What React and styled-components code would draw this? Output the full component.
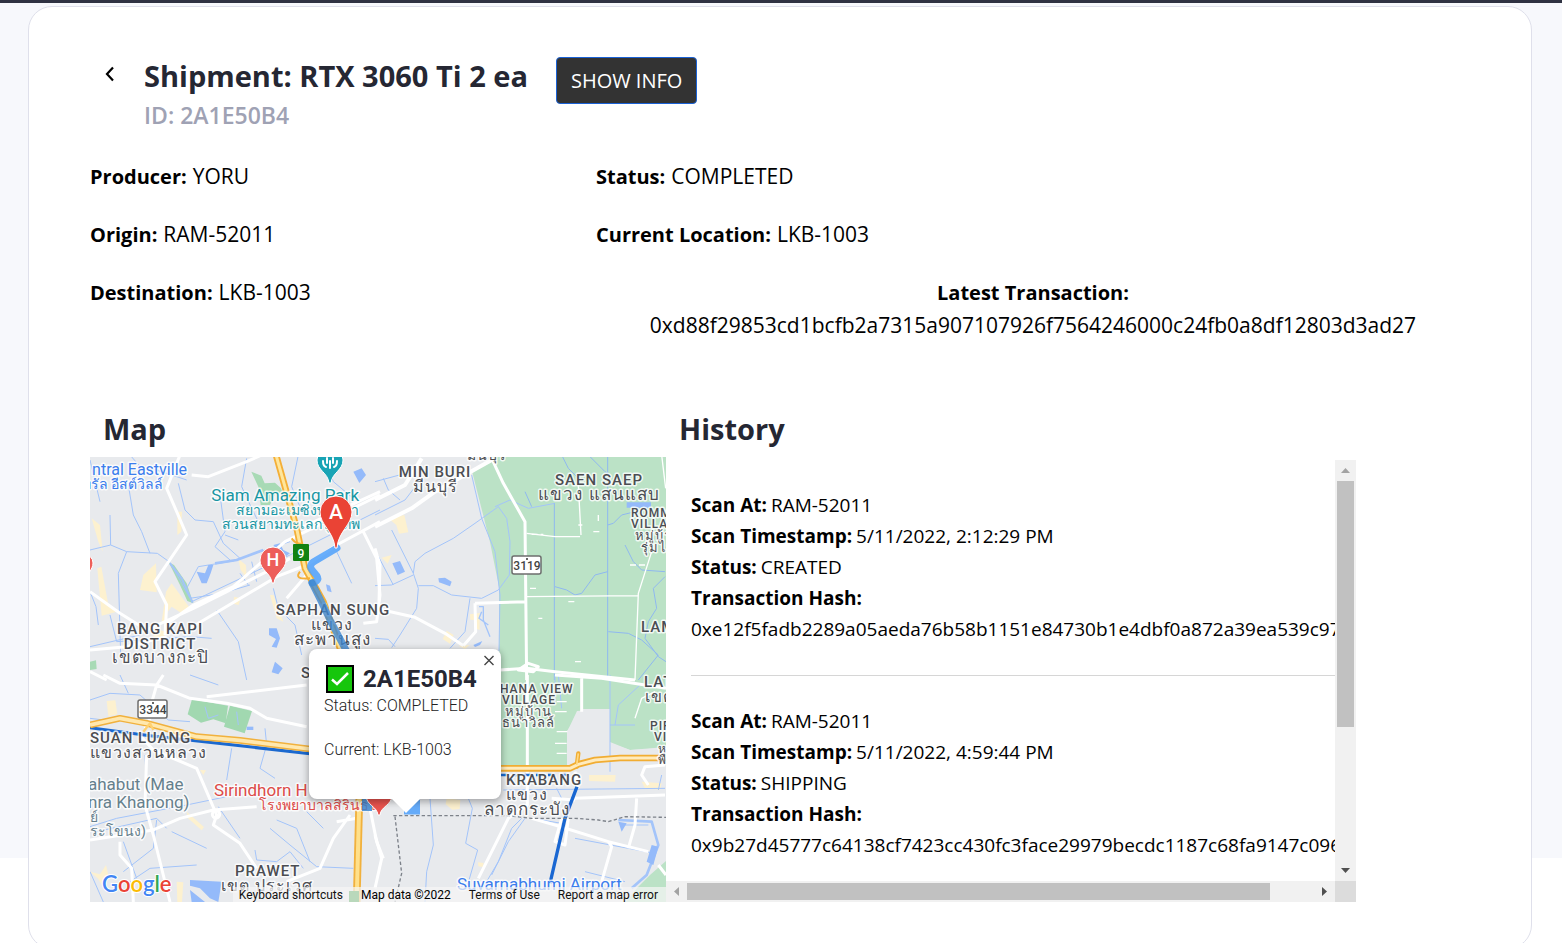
import React, { useState } from "react";
import styled, { createGlobalStyle } from "styled-components";

const GlobalStyle = createGlobalStyle`
  *, *::before, *::after { box-sizing: border-box; }
  body {
    margin: 0;
    color: #000;
    background: #fff;
    font-family: "Open Sans", "Noto Sans", sans-serif;
  }
  h1, h2, h3, p, dl, dd, ul { margin: 0; padding: 0; }
  button { font-family: inherit; cursor: pointer; }
`;

const Page = styled.div`
  min-height: 100vh;
  border-top: 3px solid #2f3242;
  background: linear-gradient(#f7f8fc 0 855px, #fff 855px);
`;

const Card = styled.main`
  margin: 3px 30px 0 28px;
  padding: 50px 61px 46px;
  border: 1px solid #dfe0eb;
  border-radius: 24px;
  background: #fff;
`;

const Header = styled.header`
  display: flex;
  align-items: flex-start;
  padding-left: 8px;
`;

const BackButton = styled.button`
  display: flex;
  align-items: center;
  justify-content: center;
  width: 24px;
  height: 34px;
  margin-right: 22px;
  padding: 0;
  border: 0;
  background: none;
`;

const Title = styled.h1`
  font-size: 29px;
  line-height: 38px;
  font-weight: 700;
  color: #252733;
`;

const ShipmentId = styled.p`
  font-size: 23px;
  line-height: 40px;
  font-weight: 600;
  color: #9fa2b4;
`;

const InfoButton = styled.button`
  height: 47px;
  margin-left: 28px;
  padding: 0 14px;
  border: 1px solid #1a62d6;
  border-radius: 4px;
  background: #333;
  color: #fff;
  font-size: 20px;
`;

const Details = styled.dl`
  display: grid;
  grid-template-columns: 11fr 19fr;
  row-gap: 25px;
  margin-top: 25px;
  font-size: 21px;
  line-height: 33px;
`;

const Detail = styled.div`
  display: flex;
  flex-direction: ${(p) => (p.$stacked ? "column" : "row")};
  align-items: ${(p) => (p.$stacked ? "center" : "baseline")};
  column-gap: 6px;
`;

const DetailTerm = styled.dt`
  font-size: 20px;
  font-weight: 700;
`;

const Term = styled.dt`
  font-weight: 700;
`;

const Value = styled.dd`
  font-weight: 400;
`;

const Panels = styled.div`
  display: grid;
  grid-template-columns: 96fr 115fr 19fr;
  margin-top: 70px;
`;

const Panel = styled.section`
  display: flex;
  flex-direction: column;
  min-width: 0;
`;

const PanelTitle = styled.h2`
  padding-left: 13px;
  padding-bottom: ${(p) => p.$space};
  font-size: 29px;
  line-height: 34px;
  font-weight: 700;
  color: #252733;
`;

const MapFrame = styled.div`
  position: relative;
  height: 445px;
  overflow: hidden;
  background: #e8eaed;
  font-family: Roboto, "Noto Sans", sans-serif;
`;

const MapSvg = styled.svg`
  display: block;
  width: 100%;
  height: 100%;
`;

const InfoWindow = styled.div`
  position: absolute;
  left: 219px;
  top: 192px;
  width: 192px;
  height: 150px;
  padding: 14px 14px 0 15px;
  border-radius: 8px;
  background: #fff;
  box-shadow: 0 2px 7px 1px rgba(0, 0, 0, 0.3);
  color: #222;
  font-size: 16px;
  font-weight: 300;
  line-height: 22px;

  &::after {
    content: "";
    position: absolute;
    top: 149px;
    left: 82px;
    border: 15px solid transparent;
    border-top-color: #fff;
    border-bottom-width: 0;
  }
`;

const MarkerTitle = styled.h3`
  display: flex;
  align-items: center;
  gap: 8px;
  height: 32px;
  padding-left: 2px;
  font-size: 24px;
  font-weight: 700;
  color: #252733;
`;

const MarkerLine = styled.p`
  height: 44px;
`;

const CloseButton = styled.button`
  position: absolute;
  top: 4px;
  right: 4px;
  width: 16px;
  height: 16px;
  padding: 0;
  border: 0;
  background: none;
  line-height: 0;
`;

const Attribution = styled.div`
  position: absolute;
  right: 0;
  bottom: 0;
  display: flex;
  gap: 18px;
  height: 15px;
  padding: 1px 8px 0 6px;
  background: rgba(245, 245, 245, 0.72);
  font-size: 12px;
  line-height: 15px;
  white-space: nowrap;
`;

const MapLink = styled.a`
  color: #111;
  text-decoration: none;
`;

const MapAction = styled.button`
  padding: 0;
  border: 0;
  background: none;
  color: #111;
  font-size: 12px;
  line-height: 15px;
`;

const ScrollBox = styled.div`
  display: grid;
  grid-template-columns: minmax(0, 1fr) 21px;
  grid-template-rows: minmax(0, 1fr) 21px;
  height: 442px;
`;

const Viewport = styled.div`
  overflow: auto;
  padding: 30px 0 0 25px;
  scrollbar-width: none;
`;

const Track = styled.div`
  display: flex;
  flex-direction: ${(p) => (p.$vertical ? "column" : "row")};
  background: #f1f1f1;
`;

const ArrowButton = styled.button`
  flex: none;
  display: flex;
  align-items: center;
  justify-content: center;
  width: 21px;
  height: 21px;
  padding: 0;
  border: 0;
  background: none;
  color: ${(p) => (p.$dim ? "#a3a3a3" : "#505050")};
`;

const Groove = styled.div`
  flex: 1;
  padding: ${(p) => (p.$vertical ? "0 2px" : "2px 0")};
`;

const Thumb = styled.div`
  width: ${(p) => (p.$vertical ? "100%" : "93%")};
  height: ${(p) => (p.$vertical ? "65%" : "100%")};
  background: #c1c1c1;
`;

const Corner = styled.div`
  background: #dcdcdc;
`;

const Scan = styled.dl`
  padding-bottom: 30px;
  font-size: 19px;
  line-height: 31px;
  white-space: nowrap;

  & + & {
    padding-top: 30px;
    border-top: 1px solid #d6d6d6;
  }
`;

const Pair = styled.div`
  display: flex;
  flex-direction: ${(p) => (p.$stacked ? "column" : "row")};
  column-gap: 4px;
`;

const Label = styled.text`
  font-family: Roboto, "Noto Sans", sans-serif;
  font-size: ${(p) => p.$size}px;
  font-weight: ${(p) => p.$weight || 500};
  letter-spacing: ${(p) => (p.$tracked ? "1px" : "normal")};
  fill: ${(p) => p.$color || "#4b4d52"};
  stroke: #fff;
  stroke-width: 3px;
  stroke-opacity: 0.8;
  stroke-linejoin: round;
  paint-order: stroke;
`;

const PlainLabel = styled.text`
  font-family: Roboto, sans-serif;
  font-size: ${(p) => p.$size}px;
  font-weight: 500;
  fill: ${(p) => p.$color};
  text-anchor: middle;
`;

const Logo = styled.text`
  font-family: Lato, Roboto, sans-serif;
  font-size: 22px;
  font-weight: 600;
  stroke: #fff;
  stroke-width: 2px;
  paint-order: stroke;
`;

const BLUE = "#3b7ded";
const TEAL = "#1796a3";
const RED = "#dd4b48";
const SLATE = "#66808c";

const labels = [
  [97, 18, 16, "ntral Eastville", BLUE, "end"],
  [73, 32, 14, "ทรัล อีสต์วิลล์", BLUE, "end"],
  [269, 44, 17, "Siam Amazing Park", TEAL, "end"],
  [269, 58, 14, "สยามอะเมซิ่งพาร์คา", TEAL, "end"],
  [270, 72, 14, "สวนสยามทะเลกรุงเทพ", TEAL, "end"],
  [124, 339, 17, "Sirindhorn H", RED, "start"],
  [169, 353, 14, "โรงพยาบาลสิรินธร", RED, "start"],
  [-2, 333, 17, "ahabut (Mae", SLATE, "start"],
  [-2, 351, 17, "nra Khanong)", SLATE, "start"],
  [0, 365, 14, "ย์", SLATE, "start"],
  [0, 379, 14, "ระโขนง)", SLATE, "start"],
  [367, 433, 17, "Suvarnabhumi Airport", BLUE, "start"],
];

const places = [
  [397, 3, 14, "มีนบุรี", "middle"],
  [345, 20, 15, "MIN BURI", "middle"],
  [345, 35, 16, "มีนบุรี", "middle"],
  [509, 28, 15, "SAEN SAEP", "middle"],
  [509, 43, 17, "แขวง แสนแสบ", "middle"],
  [541, 60, 12, "ROMM", "start"],
  [541, 71, 12, "VILLA", "start"],
  [545, 83, 13, "หมู่บ้าน", "start"],
  [551, 95, 13, "รุ่มไทร", "start"],
  [551, 175, 15, "LAM", "start"],
  [243, 158, 15, "SAPHAN SUNG", "middle"],
  [242, 173, 16, "แขวง", "middle"],
  [242, 188, 17, "สะพานสูง", "middle"],
  [70, 177, 15, "BANG KAPI", "middle"],
  [70, 192, 15, "DISTRICT", "middle"],
  [70, 206, 17, "เขตบางกะปิ", "middle"],
  [211, 221, 15, "S", "start"],
  [410, 236, 12, "HANA VIEW", "start"],
  [439, 247, 12, "VILLAGE", "middle"],
  [438, 259, 13, "หมู่บ้าน", "middle"],
  [438, 270, 13, "ธนาวิลล์", "middle"],
  [554, 230, 15, "LAT", "start"],
  [555, 245, 16, "เขต", "start"],
  [560, 273, 12, "PIR", "start"],
  [564, 284, 12, "VI", "start"],
  [568, 296, 12, "ห", "start"],
  [568, 307, 12, "พื", "start"],
  [0, 286, 15, "SUAN LUANG", "start"],
  [0, 301, 16, "แขวงสวนหลวง", "start"],
  [145, 419, 15, "PRAWET", "start"],
  [131, 434, 16, "เขต ประเวศ", "start"],
  [416, 328, 15, "KRABANG", "start"],
  [437, 343, 16, "แขวง", "middle"],
  [437, 358, 17, "ลาดกระบัง", "middle"],
];

/* Map tiles: each group is drawn at three units to the pixel. */
const Q1 = "translate(0 -2) scale(.33333)";
const Q2 = "translate(285 -2) scale(.33333)";
const Q3 = "translate(0 218) scale(.33333)";
const Q4 = "translate(285 218) scale(.33333)";

function Pin({ x, y, fill, stroke, r, h, children, size }) {
  const cy = y - h;
  return (
    <g>
      <path
        d={`M${x - 1} ${y} C${x - 2} ${y - h * 0.45} ${x - r} ${cy + r * 0.8} ${x - r} ${cy} A${r} ${r} 0 0 1 ${x + r} ${cy} C${x + r} ${cy + r * 0.8} ${x + 2} ${y - h * 0.45} ${x + 1} ${y}Z`}
        fill={fill}
        stroke={stroke}
      />
      <PlainLabel x={x} y={cy + size / 3} $size={size} $color="#fff">
        {children}
      </PlainLabel>
    </g>
  );
}

function Shield({ x, y, children }) {
  return (
    <g>
      <rect x={x} y={y} width="29" height="18" rx="2" fill="#fff" stroke="#6d6d6d" strokeWidth="1.5" />
      <PlainLabel x={x + 15} y={y + 14} $size={12} $color="#444">{children}</PlainLabel>
      <circle cx={x + 15} cy={y + 3} r="1" fill="#333" />
    </g>
  );
}

function MapDrawing() {
  return (
    <MapSvg viewBox="0 0 576 445" preserveAspectRatio="xMinYMin slice" role="img" aria-label="Shipment route map">
      <rect width="576" height="445" fill="#e8eaed" />
      <g fill="#bbe2c6">
        <path d="M382 14 L402 0 H576 V291 L540 293 L520 285 V252 H492 L477 274 V311 L409 313 V180 L409 130 L400 85Z" />
        <path d="M576 404 L560 418 L548 430 L536 445 H576Z" />
      </g>
      <path d="M477 275 L487 254 L518 252 L520 286 L540 293 L576 290 V312 H477Z" fill="#e8eaed" />
      <g transform={Q1} fill="#a8dab5">
        <path d="M484 50 L514 62 524 85 555 83 573 100 577 112 555 118 540 150 512 150 505 95Z" />
        <path d="M236 322 L252 330 290 385 310 445 292 438 270 390Z" />
        <path d="M0 620 L18 616 20 642 0 645Z" />
      </g>
      <g transform={Q3} fill="#a1d8b0">
        <path d="M306 73 L414 92 407 145 370 133 333 143 293 118Z" />
        <path d="M420 92 L486 108 464 175 402 155Z" />
      </g>
      <g transform={Q1} fill="#fdf1cf">
        <path d="M5 190 L30 210 38 290 25 260Z M22 340 34 335 55 450 80 470 35 482Z M160 360 198 325 200 412 150 405Z M262 170 276 170 274 230 262 240Z M445 312 468 330 470 370 452 345Z M228 410 245 385 300 460 275 475 245 455 225 480 238 505 215 500Z M540 420 550 420 580 500 560 490Z M432 425 452 430 446 450 430 446Z M190 520 228 530 215 560 190 545Z" />
      </g>
      <g transform={Q2} fill="#fdf1cf">
        <path d="M40 190 L88 180 100 232 72 236 64 210Z M20 308 50 300 38 326Z M285 478 314 474 314 525 300 520 300 495 286 494Z M215 527 236 540 225 566 203 552Z M250 572 284 570 270 582Z" />
      </g>
      <g transform={Q3} fill="#fdf1cf">
        <path d="M50 78 L76 76 82 118 55 124Z M0 590 30 598 48 570 55 600 40 640 25 612Z M260 620 280 622 276 681 262 681Z M290 410 342 456 335 466 294 430Z M330 285 348 286 340 300Z" />
      </g>
      <g transform={Q4} fill="#fdf1cf">
        <path d="M215 370 L256 375 254 402 232 404 212 388Z M642 300 722 300 720 320 642 318Z M800 320 860 325 855 344 810 340Z M309 562 326 564 324 576 310 574Z" />
      </g>

      <g fill="none" stroke="#a3c4fa" strokeWidth="3" strokeLinejoin="round">
        <g transform={Q1}>
          <path d="M60 180 L62 270 110 290 202 295 240 322 275 385 300 430 395 415 480 390 M110 290 L85 355 92 600 M0 285 L62 270 M120 0 L155 40 200 45 290 75 M0 410 18 455 25 510 M115 90 130 180 155 230 180 295 M290 400 325 335 430 318 480 300 600 260 M0 15 30 140" />
          <path d="M265 85 L285 165 315 195 370 200 400 265 450 310 M390 120 405 230 375 275 420 315 M405 240 445 255 M470 10 455 95 485 160 505 200 550 210 M305 440 600 300 870 165 M450 355 475 390 M485 320 500 380 M550 400 565 460 615 510 635 600 M740 290 785 385 M625 0 605 95 640 180 M700 0 730 80 790 130 M380 465 445 560 470 675 M60 480 80 560 300 545 365 550 M0 575 150 540" />
          <path d="M320 350 345 355 355 330 370 330 362 355 350 385 335 385Z" fill="#94bafa" stroke="none" />
          <path d="M375 325 L440 315 480 300 520 285" strokeWidth="8" />
          <path d="M240 325 L275 370 308 443" strokeWidth="6" />
          <path d="M537 520 L560 520 570 550 560 578 545 575 558 552 537 540Z M555 620 578 640 565 658 545 652Z M790 50 815 40 828 60 808 84Z M708 388 720 392 725 412 712 408Z M550 270 570 265 580 285 600 295 580 310Z" fill="#94bafa" stroke="none" />
        </g>
        <g transform={Q2}>
          <path d="M0 80 L110 50 130 20 M0 180 90 135 140 70 M25 70 40 105 75 135 M290 60 320 190 360 290 375 420 372 590 M360 155 405 135 460 160 540 145 M115 355 120 320 150 295 235 250 300 205 370 155 395 190 405 260 403 360 370 405 320 430 230 420 175 392 130 392 M0 285 55 390 M50 225 115 355 130 400 125 460 75 540 50 578 M0 392 50 390 115 360 M0 550 40 553 60 575 M285 430 270 530 225 580" />
          <path d="M538 145 V675 M698 0 V675 M450 110 470 155 M560 0 580 40 615 75 M640 0 690 50 698 55 M698 210 715 205 740 180 780 170 M750 270 775 320 800 345 870 350 M540 395 575 405 600 420 620 415 660 360 698 350 M700 530 760 535 800 555 850 600 790 675 M870 365 835 400 845 460 820 500 810 550 850 605 873 620" stroke="#8fb8f0" />
          <path d="M312 455 L325 455 325 495 345 545 M320 470 312 490 340 510" strokeWidth="4" />
          <path d="M52 325 L75 318 90 350 68 360Z M190 370 210 368 230 380 225 394 192 382Z M755 142 828 142 828 158 755 158Z M295 570 322 558 315 570 300 576Z" fill="#94bafa" stroke="none" />
        </g>
        <g transform={Q3}>
          <path d="M0 75 L60 55 150 60 235 135 300 140 M90 0 115 55 M0 130 40 135 M425 220 410 315 M525 160 530 210 510 280 555 310 M0 455 80 430 290 390 410 365 M20 470 200 430 230 460 M245 470 350 520 M385 395 450 490 M200 435 190 520 100 590 M320 570 180 580 120 620 M495 525 500 555 560 560 600 530 640 580 M540 460 600 510 680 575 790 580 M560 435 620 460 660 560 M650 410 700 460 M100 500 140 610 M0 590 40 681 M165 240 170 340" />
          <path d="M300 0 L385 30 M345 95 355 130 385 120 M440 110 445 150" />
          <path d="M300 615 L395 620 385 681 360 670 330 640 300 632Z M300 645 L345 681 305 681Z" fill="#94bafa" stroke="none" />
          <path d="M470 155 L490 155 490 165 470 165Z" fill="#94bafa" stroke="none" />
        </g>
        <g transform={Q4}>
          <path d="M165 370 L175 510 155 590 150 681 M280 370 292 400 272 505 308 525 275 640 M540 0 V80 M705 0 V290 M705 150 780 150 M720 150 730 90 795 30 M550 0 560 100 M385 345 870 340 M440 430 410 460 370 560 320 645 M450 430 400 500 350 600 M470 430 560 445 M600 490 840 535 M630 590 750 620 M740 450 820 450 M545 340 560 370 M860 300 850 345" />
          <path d="M730 435 L830 440 850 510 815 600 770 640" strokeWidth="8" />
          <path d="M730 440 L755 445 740 470Z M830 510 850 515 835 570 815 560Z" fill="#94bafa" stroke="none" />
        </g>
      </g>

      <g fill="none" stroke="#fff" strokeWidth="9" strokeLinejoin="round">
        <g transform={Q1}>
          <path d="M270 0 L230 100 290 240 195 380 230 450 225 540 M305 60 355 65 470 20 515 0 M0 410 90 475 170 525 310 460 540 345 600 310 M225 510 310 450 430 395 585 260 870 120 M300 520 560 365 650 330 740 270 870 200 M640 215 870 110 M0 585 110 575 230 545 M820 230 860 310 870 420 860 500 820 505 M650 360 590 430 M0 650 50 675" />
        </g>
        <g transform={Q2}>
          <path d="M0 135 L90 90 140 10 M0 215 110 160 180 110 350 15" strokeWidth="12" />
          <path d="M350 10 L385 85 450 200 455 675 M300 445 455 440 M300 445 302 530 265 572 M0 460 120 487 210 535 265 572 M0 280 15 330 12 440 M375 645 455 640 540 650 780 675" />
          <path d="M860 0 L872 100 M830 290 790 415 780 675 M455 425 790 422 M455 235 540 245 615 245 M610 90 618 240" strokeWidth="4" />
          <path d="M430 645 L460 625 490 635 475 650Z" />
          <path d="M470 238 H505 M465 400 h20 M655 230 h24 M765 330 h45 M580 440 h20 M490 490 h12 M610 210 h12 M670 180 v20 M600 620 h18" strokeWidth="4" strokeDasharray="18 9" />
        </g>
        <g transform={Q3}>
          <path d="M40 0 L90 25 200 30 300 70 410 85 480 100 530 130 650 155 M220 0 200 30 180 100 M350 65 650 30 M140 170 190 225 320 280 350 350 380 420 370 450 450 505 500 580 M170 240 165 390 190 480 240 681 M0 495 190 465 270 430 370 405 500 395 M90 500 90 540 125 580 130 681 M780 420 730 490 690 580 590 620 M840 400 860 500 880 550 M740 440 800 430 M190 110 165 160" />
          <circle cx="378" cy="418" r="11" />
        </g>
        <g transform={Q4}>
          <path d="M457 0 V390 L400 430 310 610 M540 0 680 10 873 40 M620 0 V110 M600 290 610 340 M470 430 540 450 700 500 710 515 680 620 M700 500 820 530 M785 370 780 450 760 520 M600 370 870 360 M820 330 800 300 810 275 870 270 M530 370 600 375 M0 480 20 550 0 640 M560 430 540 500 570 510 580 430 M850 570 873 600" />
          <path d="M540 110 H575 M545 170 h32 M540 205 h35 M545 235 h30 M780 130 l20 -60 40 -20 M545 80 h30" strokeWidth="4" />
        </g>
      </g>

      <g fill="none" strokeLinejoin="round">
        <g transform={Q1}>
          <path d="M558 0 L620 220 645 340 700 440 750 580" stroke="#f4af37" strokeWidth="20" />
          <path d="M558 0 L620 220 645 340 700 440 750 580" stroke="#ffe69b" strokeWidth="9" />
          <path d="M605 250 Q620 270 635 265 M630 350 Q610 375 660 370" stroke="#f4af37" strokeWidth="6" />
        </g>
        <g transform={Q3}>
          <path d="M0 158 L180 182 660 236" stroke="#1b69cf" strokeWidth="9" />
          <path d="M0 150 L90 130 170 145 320 185 450 196 660 222" stroke="#f1b13d" strokeWidth="20" />
          <path d="M0 150 L90 130 170 145 320 185 450 196 660 222" stroke="#ffe8ae" strokeWidth="11" />
          <path d="M160 170 L180 145 190 165" stroke="#ffd170" strokeWidth="7" />
          <path d="M808 370 L800 681" stroke="#f1b13d" strokeWidth="23" />
          <path d="M808 370 L800 681" stroke="#ffe08a" strokeWidth="12" />
        </g>
        <g transform={Q4}>
          <path d="M375 300 H590" stroke="#1b69cf" strokeWidth="8" strokeDasharray="22 14" />
          <path d="M606 335 L570 430 525 625" stroke="#1967d2" strokeWidth="10" />
          <path d="M375 280 H585 L610 268 660 255 735 249 H873" stroke="#f1ad32" strokeWidth="20" />
          <path d="M605 275 L610 235" stroke="#f1ad32" strokeWidth="13" strokeLinecap="round" />
          <path d="M375 280 H585 L610 268 660 255 735 249 H873" stroke="#ffebbd" strokeWidth="9" />
          <path d="M605 270 L610 235" stroke="#ffd982" strokeWidth="5" />
          <path d="M55 422 H400 L470 430 600 430 670 435 700 440 750 425 873 427 M60 425 L80 595 60 681" stroke="#7d828a" strokeWidth="4" strokeDasharray="10 7" />
        </g>
      </g>

      {labels.map(([x, y, size, text, color, anchor]) => (
        <Label key={text} x={x} y={y} $size={size} $color={color} $weight={400} textAnchor={anchor}>{text}</Label>
      ))}
      {places.map(([x, y, size, text, anchor], i) => (
        <Label key={i} x={x} y={y} $size={size} $tracked textAnchor={anchor}>{text}</Label>
      ))}

      <Shield x={422} y={99}>3119</Shield>
      <Shield x={48} y={243}>3344</Shield>
      <rect x="203" y="87" width="16" height="17" rx="1" fill="#118212" />
      <PlainLabel x="211" y="101" $size={12} $color="#fff">9</PlainLabel>
      <rect x="259" y="434" width="10" height="11" fill="#1f8b24" />

      <g fill="none" stroke="#4da0fa" strokeOpacity="0.85" strokeLinecap="round" strokeLinejoin="round">
        <path d="M247 91 L225 104 Q218 108 222 113 L227 119 Q230 124 222 126" strokeWidth="7" />
        <path d="M222 126 L231 144 241 165 257 195" strokeWidth="7" stroke="#3c86cf" strokeOpacity="0.8" />
        <path d="M272 347 H282" strokeWidth="14" strokeLinecap="butt" stroke="#3c86cf" />
        <path d="M314 350 H330" strokeWidth="15" strokeLinecap="butt" />
      </g>

      <Pin x={240} y={26} r={13} h={23} fill="#19a4b5" stroke="#fff" size={12} />
      <g stroke="#fff" strokeWidth="2" fill="none" strokeLinecap="round">
        <path d="M240 4 V11 M237 1 V6 M243 1 V6 M233 4 Q233 9 236 10 M247 4 Q247 9 244 10" />
      </g>
      <Pin x={-6} y={126} r={9} h={20} fill="#ee5f59" stroke="#fff" size={12} />
      <Pin x={183} y={126} r={13} h={23} fill="#ed5e5a" stroke="#fff" size={18}>H</Pin>
      <Pin x={289} y={358} r={13} h={20} fill="#e9534e" stroke="#fff" size={18} />
      <Pin x={246} y={91} r={16} h={36} fill="#ea4335" stroke="#fff" size={21}>A</Pin>

      <Logo x="12" y="435">
        <tspan fill="#4285f4">G</tspan>
        <tspan fill="#ea4335">o</tspan>
        <tspan fill="#fbbc05">o</tspan>
        <tspan fill="#4285f4">g</tspan>
        <tspan fill="#34a853">l</tspan>
        <tspan fill="#ea4335">e</tspan>
      </Logo>
    </MapSvg>
  );
}

const scans = [
  {
    at: "RAM-52011",
    time: "5/11/2022, 2:12:29 PM",
    status: "CREATED",
    hash: "0xe12f5fadb2289a05aeda76b58b1151e84730b1e4dbf0a872a39ea539c97a",
  },
  {
    at: "RAM-52011",
    time: "5/11/2022, 4:59:44 PM",
    status: "SHIPPING",
    hash: "0x9b27d45777c64138cf7423cc430fc3face29979becdc1187c68fa9147c096",
  },
];

function Arrow({ turn }) {
  return (
    <svg width="11" height="11" viewBox="0 0 11 11" aria-hidden="true">
      <path d="M1 8 L5.5 3 10 8Z" fill="currentColor" transform={`rotate(${turn} 5.5 5.5)`} />
    </svg>
  );
}

function DetailItem({ term, value, stacked }) {
  return (
    <Detail $stacked={stacked}>
      <DetailTerm>{term}:</DetailTerm>
      <Value>{value}</Value>
    </Detail>
  );
}

function ScanItem({ scan }) {
  return (
    <Scan>
      <Pair><Term>Scan At:</Term><Value>{scan.at}</Value></Pair>
      <Pair><Term>Scan Timestamp:</Term><Value>{scan.time}</Value></Pair>
      <Pair><Term>Status:</Term><Value>{scan.status}</Value></Pair>
      <Pair $stacked><Term>Transaction Hash:</Term><Value>{scan.hash}</Value></Pair>
    </Scan>
  );
}

export default function App() {
  const [markerOpen, setMarkerOpen] = useState(true);
  return (
    <>
      <GlobalStyle />
      <Page>
        <Card>
          <Header>
            <BackButton type="button" aria-label="Back">
              <svg width="12" height="18" viewBox="0 0 12 18" aria-hidden="true">
                <path d="M9 2.5 L3 9 9 15.5" fill="none" stroke="#000" strokeWidth="2.2" />
              </svg>
            </BackButton>
            <div>
              <Title>Shipment: RTX 3060 Ti 2 ea</Title>
              <ShipmentId>ID: 2A1E50B4</ShipmentId>
            </div>
            <InfoButton type="button">SHOW INFO</InfoButton>
          </Header>

          <Details>
            <DetailItem term="Producer" value="YORU" />
            <DetailItem term="Status" value="COMPLETED" />
            <DetailItem term="Origin" value="RAM-52011" />
            <DetailItem term="Current Location" value="LKB-1003" />
            <DetailItem term="Destination" value="LKB-1003" />
            <DetailItem
              stacked
              term="Latest Transaction"
              value="0xd88f29853cd1bcfb2a7315a907107926f7564246000c24fb0a8df12803d3ad27"
            />
          </Details>

          <Panels>
            <Panel>
              <PanelTitle $space="11px">Map</PanelTitle>
              <MapFrame>
                <MapDrawing />
                {markerOpen && (
                  <InfoWindow>
                    <MarkerTitle>
                      <svg width="29" height="29" viewBox="0 0 29 29" aria-hidden="true">
                        <rect x="1" y="1" width="26" height="26" fill="#16c60c" stroke="#000" strokeWidth="2" />
                        <path d="M6 14.5 L11 19 22 8" fill="none" stroke="#fff" strokeWidth="2.5" />
                      </svg>
                      2A1E50B4
                    </MarkerTitle>
                    <MarkerLine>Status: COMPLETED</MarkerLine>
                    <MarkerLine>Current: LKB-1003</MarkerLine>
                    <CloseButton type="button" aria-label="Close" onClick={() => setMarkerOpen(false)}>
                      <svg width="16" height="16" viewBox="0 0 16 16" aria-hidden="true">
                        <path d="M3.5 3 L12.5 12 M12.5 3 L3.5 12" stroke="#444" strokeWidth="1.4" />
                      </svg>
                    </CloseButton>
                  </InfoWindow>
                )}
                <Attribution>
                  <MapAction type="button">Keyboard shortcuts</MapAction>
                  <span>Map data ©2022</span>
                  <MapLink href="#terms">Terms of Use</MapLink>
                  <MapLink href="#report">Report a map error</MapLink>
                </Attribution>
              </MapFrame>
            </Panel>

            <Panel>
              <PanelTitle $space="14px">History</PanelTitle>
              <ScrollBox>
                <Viewport tabIndex={0}>
                  {scans.map((scan) => (
                    <ScanItem key={scan.time} scan={scan} />
                  ))}
                </Viewport>
                <Track $vertical>
                  <ArrowButton type="button" aria-label="Scroll up" $dim><Arrow turn={0} /></ArrowButton>
                  <Groove $vertical><Thumb $vertical /></Groove>
                  <ArrowButton type="button" aria-label="Scroll down"><Arrow turn={180} /></ArrowButton>
                </Track>
                <Track>
                  <ArrowButton type="button" aria-label="Scroll left" $dim><Arrow turn={270} /></ArrowButton>
                  <Groove><Thumb /></Groove>
                  <ArrowButton type="button" aria-label="Scroll right"><Arrow turn={90} /></ArrowButton>
                </Track>
                <Corner />
              </ScrollBox>
            </Panel>
          </Panels>
        </Card>
      </Page>
    </>
  );
}
